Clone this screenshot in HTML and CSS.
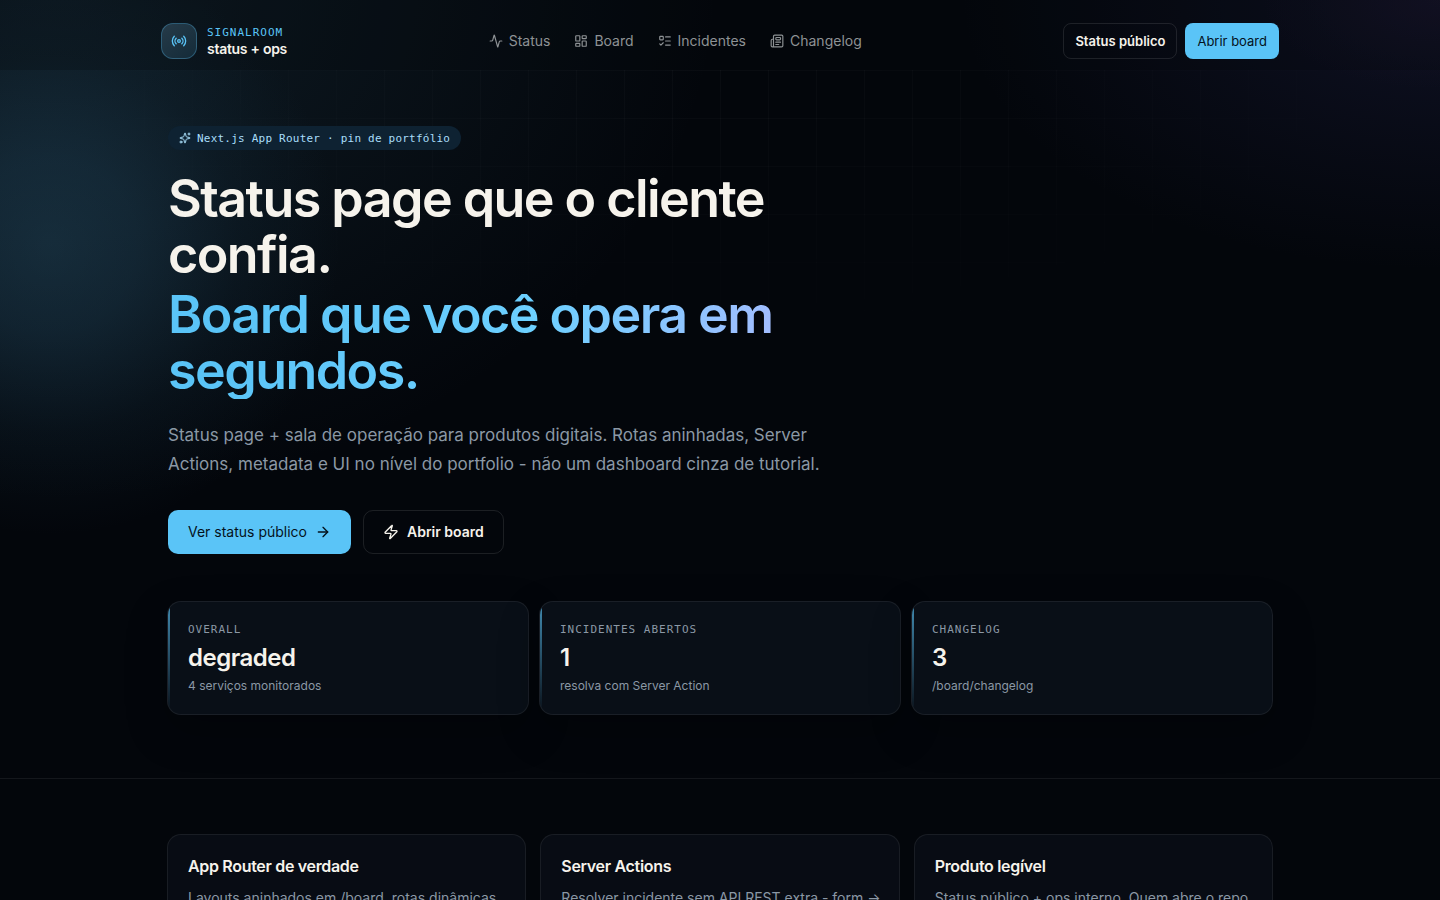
FILE: index.html
```html
<!DOCTYPE html>
<html lang="pt-BR">
<head>
  <meta charset="UTF-8">
  <meta name="viewport" content="width=device-width, initial-scale=1.0">
  <title>SignalRoom</title>
  <link rel="stylesheet" href="styles.css">
</head>
<body>
  <!-- Header -->
  <header class="header">
    <div class="header-inner">
      <a class="brand" href="#">
        <span class="brand-mark">
          <svg class="icon" width="16" height="16" viewBox="0 0 24 24"><path d="M16.247 7.761a6 6 0 0 1 0 8.478"/><path d="M19.075 4.933a10 10 0 0 1 0 14.134"/><path d="M4.925 19.067a10 10 0 0 1 0-14.134"/><path d="M7.753 16.239a6 6 0 0 1 0-8.478"/><circle cx="12" cy="12" r="2"/></svg>
        </span>
        <span class="brand-text">
          <span class="brand-name">SIGNALROOM</span>
          <span class="brand-sub">status + ops</span>
        </span>
      </a>
      <nav class="nav">
        <a class="nav-link" href="#">
          <svg class="icon" width="14" height="14" viewBox="0 0 24 24"><path d="M22 12h-2.48a2 2 0 0 0-1.93 1.46l-2.35 8.36a.25.25 0 0 1-.48 0L9.24 2.18a.25.25 0 0 0-.48 0l-2.35 8.36A2 2 0 0 1 4.49 12H2"/></svg>
          Status
        </a>
        <a class="nav-link" href="#">
          <svg class="icon" width="14" height="14" viewBox="0 0 24 24"><rect width="7" height="9" x="3" y="3" rx="1"/><rect width="7" height="5" x="14" y="3" rx="1"/><rect width="7" height="9" x="14" y="12" rx="1"/><rect width="7" height="5" x="3" y="16" rx="1"/></svg>
          Board
        </a>
        <a class="nav-link" href="#">
          <svg class="icon" width="14" height="14" viewBox="0 0 24 24"><rect x="3" y="4" width="6" height="6" rx="1"/><path d="m3 17 2 2 4-4"/><path d="M13 5h8"/><path d="M13 12h8"/><path d="M13 19h8"/></svg>
          Incidentes
        </a>
        <a class="nav-link" href="#">
          <svg class="icon" width="14" height="14" viewBox="0 0 24 24"><path d="M15 18h-5"/><path d="M18 14h-8"/><path d="M4 22h16a2 2 0 0 0 2-2V4a2 2 0 0 0-2-2H8a2 2 0 0 0-2 2v16a2 2 0 0 1-4 0v-9a2 2 0 0 1 2-2h2"/><rect width="8" height="4" x="10" y="6" rx="1"/></svg>
          Changelog
        </a>
      </nav>
      <div class="header-actions">
        <a class="button button-small button-ghost" href="#">Status público</a>
        <a class="button button-small button-primary" href="#">Abrir board</a>
      </div>
    </div>
  </header>

  <main>
    <!-- Hero -->
    <section class="hero">
      <div class="container">
        <p class="pill">
          <svg class="icon" width="12" height="12" viewBox="0 0 24 24"><path d="M11.017 2.814a1 1 0 0 1 1.966 0l1.051 5.558a2 2 0 0 0 1.594 1.594l5.558 1.051a1 1 0 0 1 0 1.966l-5.558 1.051a2 2 0 0 0-1.594 1.594l-1.051 5.558a1 1 0 0 1-1.966 0l-1.051-5.558a2 2 0 0 0-1.594-1.594l-5.558-1.051a1 1 0 0 1 0-1.966l5.558-1.051a2 2 0 0 0 1.594-1.594z"/><path d="M20 2v4"/><path d="M22 4h-4"/><circle cx="4" cy="20" r="2"/></svg>
          Next.js App Router · pin de portfólio
        </p>
        <h1 class="title">
          Status page que o cliente confia.
          <span class="title-accent">Board que você opera em segundos.</span>
        </h1>
        <p class="lead">Status page + sala de operação para produtos digitais. Rotas aninhadas, Server Actions, metadata e UI no nível do portfolio - não um dashboard cinza de tutorial.</p>
        <div class="hero-actions">
          <a class="button button-primary" href="#">
            Ver status público
            <svg class="icon" width="16" height="16" viewBox="0 0 24 24"><path d="M5 12h14"/><path d="m12 5 7 7-7 7"/></svg>
          </a>
          <a class="button button-ghost" href="#">
            <svg class="icon" width="16" height="16" viewBox="0 0 24 24"><path d="M4 14a1 1 0 0 1-.78-1.63l9.9-10.2a.5.5 0 0 1 .86.46l-1.92 6.02A1 1 0 0 0 13 10h7a1 1 0 0 1 .78 1.63l-9.9 10.2a.5.5 0 0 1-.86-.46l1.92-6.02A1 1 0 0 0 11 14z"/></svg>
            Abrir board
          </a>
        </div>
      </div>
      <div class="container container-cards">
        <div class="stats">
          <div class="stat">
            <p class="stat-label">OVERALL</p>
            <p class="stat-value">degraded</p>
            <p class="stat-hint">4 serviços monitorados</p>
          </div>
          <div class="stat">
            <p class="stat-label">INCIDENTES ABERTOS</p>
            <p class="stat-value">1</p>
            <p class="stat-hint">resolva com Server Action</p>
          </div>
          <div class="stat">
            <p class="stat-label">CHANGELOG</p>
            <p class="stat-value">3</p>
            <p class="stat-hint">/board/changelog</p>
          </div>
        </div>
      </div>
    </section>

    <!-- Features -->
    <section class="features">
      <div class="container container-cards">
        <div class="feature-grid">
          <article class="feature">
            <h2>App Router de verdade</h2>
            <p>Layouts aninhados em /board, rotas dinâmicas</p>
          </article>
          <article class="feature">
            <h2>Server Actions</h2>
            <p>Resolver incidente sem API REST extra - form →</p>
          </article>
          <article class="feature">
            <h2>Produto legível</h2>
            <p>Status público + ops interno. Quem abre o repo</p>
          </article>
        </div>
      </div>
    </section>
  </main>
</body>
</html>
```

FILE: styles.css
```css
:root {
  --bg: #03060b;
  --text: #f6f3ec;
  --muted: #8b98a5;
  --accent: #5ac4f7;
  --line: rgba(255, 255, 255, 0.07);
  --sans: Inter, "Liberation Sans", sans-serif;
  --mono: "DejaVu Sans Mono", "Liberation Mono", monospace;
}

* {
  box-sizing: border-box;
}

body {
  margin: 0;
  min-height: 100vh;
  overflow-x: hidden;
  font-family: var(--sans);
  font-size: 14px;
  color: var(--text);
  background:
    radial-gradient(circle 290px at 50px 245px, rgba(56, 115, 148, 0.28), rgba(50, 105, 138, 0.24) 30%, rgba(40, 90, 120, 0.1) 65%, transparent),
    radial-gradient(ellipse 660px 520px at 60px -20px, rgba(60, 115, 140, 0.2), transparent),
    radial-gradient(ellipse 180px 90px at 1440px 0, rgba(90, 40, 90, 0.1), transparent),
    radial-gradient(ellipse 480px 270px at 1440px 0, rgba(60, 60, 130, 0.2), transparent),
    var(--bg);
  background-repeat: no-repeat;
}

h1, h2, p {
  margin: 0;
}

a {
  color: inherit;
  text-decoration: none;
}

.icon {
  flex-shrink: 0;
  fill: none;
  stroke: currentColor;
  stroke-width: 2;
  stroke-linecap: round;
  stroke-linejoin: round;
}

.container {
  position: relative;
  max-width: 1152px;
  margin: 0 auto;
  padding: 0 24px;
}

.container-cards {
  padding: 0 23px;
}

/* Header */
.header {
  padding: 23px 16px 11px;
  background: rgba(3, 6, 11, 0.25);
}

.header-inner {
  display: flex;
  align-items: center;
  justify-content: space-between;
  max-width: 1118px;
  margin: 0 auto;
}

.brand {
  display: flex;
  align-items: center;
  gap: 10px;
}

.brand-mark {
  display: grid;
  place-items: center;
  width: 36px;
  height: 36px;
  border: 1px solid rgba(90, 196, 247, 0.3);
  border-radius: 12px;
  color: var(--accent);
  background: linear-gradient(145deg, #263b49, #142b39);
}

.brand-text {
  display: flex;
  flex-direction: column;
}

.brand-name {
  font-family: var(--mono);
  font-size: 11px;
  line-height: 16px;
  letter-spacing: 1px;
  color: var(--accent);
}

.brand-sub {
  font-weight: 600;
  line-height: 16px;
  letter-spacing: -0.02em;
}

.nav {
  display: flex;
  gap: 24px;
}

.nav-link {
  display: flex;
  align-items: center;
  gap: 6px;
  line-height: 16px;
  color: #8e9295;
}

.header-actions {
  display: flex;
  gap: 8px;
}

.button {
  display: inline-flex;
  align-items: center;
  gap: 8px;
  height: 44px;
  padding: 0 19px;
  border: 1px solid transparent;
  border-radius: 10px;
  font-size: 14px;
  line-height: 16px;
  white-space: nowrap;
}

.button-small {
  height: 36px;
  padding: 0 11px;
  border-radius: 8px;
  font-size: 13px;
}

.button-primary {
  color: #04121c;
  background: var(--accent);
}

.button-ghost {
  border-color: rgba(255, 255, 255, 0.1);
  font-weight: 600;
}

/* Hero */
.hero {
  position: relative;
  padding: 56px 0 63px;
  border-bottom: 1px solid var(--line);
}

.hero::before {
  content: "";
  position: absolute;
  inset: 0;
  background-image:
    linear-gradient(rgba(255, 255, 255, 0.028) 1px, transparent 1px),
    linear-gradient(90deg, rgba(255, 255, 255, 0.028) 1px, transparent 1px);
  background-size: 48px 48px;
  -webkit-mask-image: radial-gradient(ellipse 760px 300px at 50% 0, #000, transparent);
  mask-image: radial-gradient(ellipse 760px 300px at 50% 0, #000, transparent);
}

.pill {
  display: flex;
  align-items: center;
  gap: 6px;
  width: fit-content;
  height: 24px;
  padding: 0 11px;
  border-radius: 12px;
  font-family: var(--mono);
  font-size: 11px;
  letter-spacing: 0.02em;
  color: #a9defa;
  background: #0e2232;
}

.title {
  max-width: 720px;
  margin-top: 21px;
  font-size: 52px;
  font-weight: 600;
  line-height: 56px;
  letter-spacing: -0.03em;
}

.title-accent {
  display: block;
  margin-top: 4px;
  color: transparent;
  background: linear-gradient(110deg, #5ac4f7 10%, #6dd0ff 50%, #b0b8ff 90%);
  -webkit-background-clip: text;
  background-clip: text;
}

.lead {
  max-width: 680px;
  margin-top: 22px;
  font-size: 17px;
  line-height: 29px;
  color: var(--muted);
}

.hero-actions {
  display: flex;
  gap: 12px;
  margin-top: 31px;
}

.stats {
  display: grid;
  grid-template-columns: repeat(3, 1fr);
  gap: 10px;
  margin-top: 47px;
}

.stat {
  position: relative;
  overflow: hidden;
  padding: 20px;
  border: 1px solid var(--line);
  border-radius: 14px;
  background: #090f17;
  box-shadow: 0 16px 40px rgba(0, 0, 0, 0.25);
}

.stat::before {
  content: "";
  position: absolute;
  top: 0;
  bottom: 0;
  left: 0;
  width: 2px;
  background: linear-gradient(var(--accent), transparent);
  opacity: 0.7;
}

.stat-label {
  font-family: var(--mono);
  font-size: 11px;
  line-height: 16px;
  letter-spacing: 1px;
  color: var(--muted);
}

.stat-value {
  margin-top: 4px;
  font-size: 24px;
  font-weight: 600;
  line-height: 32px;
  letter-spacing: -0.02em;
}

.stat-hint {
  margin-top: 4px;
  font-size: 12px;
  line-height: 16px;
  color: var(--muted);
}

/* Features */
.features {
  padding: 55px 0 64px;
}

.feature-grid {
  display: grid;
  grid-template-columns: repeat(3, 1fr);
  gap: 14px;
}

.feature {
  padding: 20px 12px 20px 20px;
  border: 1px solid var(--line);
  border-radius: 14px;
  background: #080c14;
}

.feature h2 {
  font-size: 16px;
  font-weight: 600;
  line-height: 22px;
  letter-spacing: -0.02em;
}

.feature p {
  margin-top: 10px;
  line-height: 22px;
  color: var(--muted);
}
```
